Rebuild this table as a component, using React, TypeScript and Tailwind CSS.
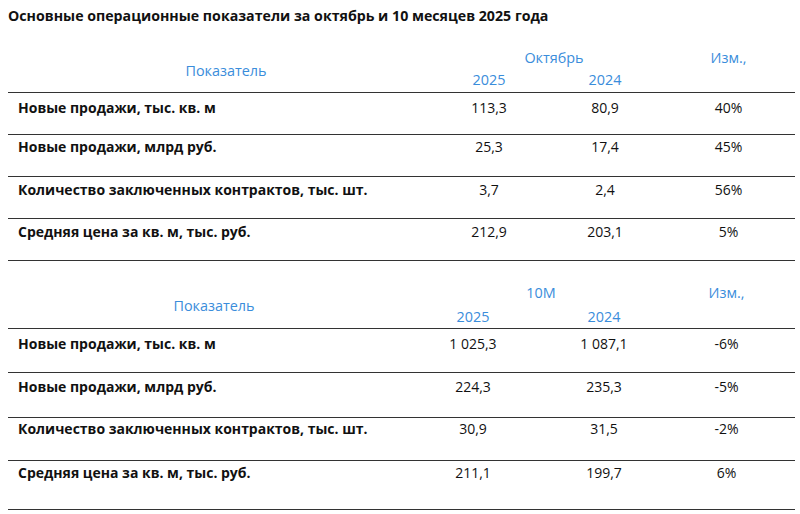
const rows1 = [
  { label: "Новые продажи, тыс. кв. м", a: "113,3", b: "80,9", c: "40%", pt: "pt-[6px]" },
  { label: "Новые продажи, млрд руб.", a: "25,3", b: "17,4", c: "45%", pt: "pt-[3px]" },
  { label: "Количество заключенных контрактов, тыс. шт.", a: "3,7", b: "2,4", c: "56%", pt: "pt-[4px]" },
  { label: "Средняя цена за кв. м, тыс. руб.", a: "212,9", b: "203,1", c: "5%", pt: "pt-[4px]" },
]

const rows2 = [
  { label: "Новые продажи, тыс. кв. м", a: "1 025,3", b: "1 087,1", c: "-6%", pt: "pt-[6px]", h: "h-[44px]" },
  { label: "Новые продажи, млрд руб.", a: "224,3", b: "235,3", c: "-5%", pt: "pt-[5px]", h: "h-[45px]" },
  { label: "Количество заключенных контрактов, тыс. шт.", a: "30,9", b: "31,5", c: "-2%", pt: "pt-[2px]", h: "h-[43px]" },
  { label: "Средняя цена за кв. м, тыс. руб.", a: "211,1", b: "199,7", c: "6%", pt: "pt-[3px]", h: "h-[49px]" },
]

const line = "border-t-[1.5px] border-[#333]"

export default function App() {
  return (
    <div className="w-[800px] h-[514px] bg-white text-[14px] text-[#111] font-['Open_Sans',sans-serif] leading-[18px]">
      <h1 className="pl-2 pt-[7px] font-bold text-[14.2px]">
        Основные операционные показатели за октябрь и 10 месяцев 2025 года
      </h1>

      {/* Октябрь */}
      <div className="ml-2 w-[787px] mt-[21px]">
        <div className="grid grid-cols-[422px_118px_114px_1fr] h-[46px] text-[#3a8ddb] text-[14.4px]">
          <div className="flex items-end justify-center pl-[14px] pb-[13px]">Показатель</div>
          <div className="col-span-2 grid grid-cols-[118px_114px] grid-rows-[22px_22px] pt-[3px]">
            <div className="col-span-2 text-center pl-[16px]">Октябрь</div>
            <div className="text-center">2025</div>
            <div className="text-center">2024</div>
          </div>
          <div className="text-center pt-[3px]">Изм.,</div>
        </div>
        {rows1.map((r) => (
          <div key={r.label} className={`grid grid-cols-[422px_118px_114px_1fr] h-[42px] ${line} ${r.pt}`}>
            <div className="pl-[10px] font-bold">{r.label}</div>
            <div className="text-center">{r.a}</div>
            <div className="text-center">{r.b}</div>
            <div className="text-center">{r.c}</div>
          </div>
        ))}
        <div className={line} />
      </div>

      {/* 10 месяцев */}
      <div className="ml-2 w-[787px] mt-[20px]">
        <div className="grid grid-cols-[412px_106px_156px_1fr] h-[47px] text-[#3a8ddb] text-[14.4px]">
          <div className="flex items-end justify-center pb-[15px]">Показатель</div>
          <div className="col-span-2 grid grid-cols-[106px_156px] grid-rows-[24px_22px] pt-[3px]">
            <div className="col-span-2 text-center pr-[20px]">10М</div>
            <div className="text-center">2025</div>
            <div className="text-center">2024</div>
          </div>
          <div className="text-center pt-[3px] pr-[24px]">Изм.,</div>
        </div>
        {rows2.map((r) => (
          <div key={r.label} className={`grid grid-cols-[412px_106px_156px_1fr] ${r.h} ${line} ${r.pt}`}>
            <div className="pl-[10px] font-bold">{r.label}</div>
            <div className="text-center">{r.a}</div>
            <div className="text-center">{r.b}</div>
            <div className="text-center pr-[24px]">{r.c}</div>
          </div>
        ))}
        <div className={line} />
      </div>
    </div>
  )
}
